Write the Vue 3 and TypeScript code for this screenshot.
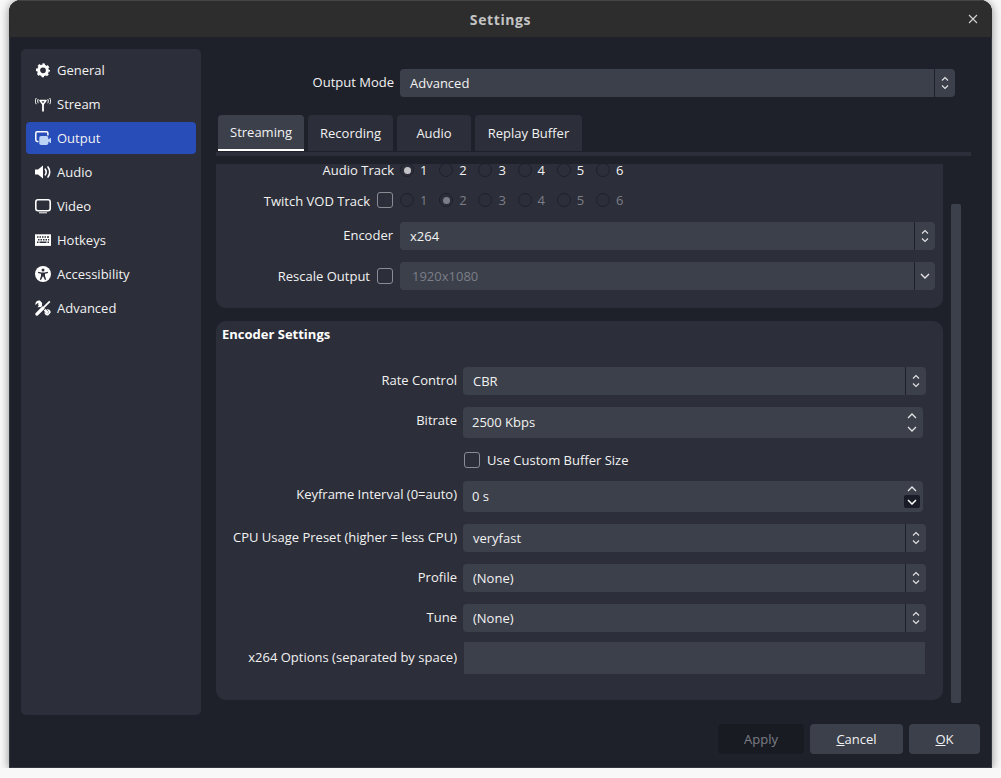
<script setup lang="ts">
const navItems: { name: string; icon: string }[] = [
  { name: 'General', icon: 'gear' },
  { name: 'Stream', icon: 'antenna' },
  { name: 'Output', icon: 'output' },
  { name: 'Audio', icon: 'speaker' },
  { name: 'Video', icon: 'monitor' },
  { name: 'Hotkeys', icon: 'keyboard' },
  { name: 'Accessibility', icon: 'person' },
  { name: 'Advanced', icon: 'tools' },
]
const tabs = ['Streaming', 'Recording', 'Audio', 'Replay Buffer']
const tracks = [1, 2, 3, 4, 5, 6]
</script>

<template>
  <div class="window">
    <header class="titlebar">
      <span class="title">Settings</span>
      <svg class="close" width="10" height="10" viewBox="0 0 10 10">
        <path d="M1 1l8 8M9 1l-8 8" stroke="#d2d2d2" stroke-width="1.1" fill="none" />
      </svg>
    </header>

    <div class="body">
      <nav class="sidebar">
        <div v-for="item in navItems" :key="item.name" class="nav-item" :class="{ active: item.name === 'Output' }">
          <svg class="nav-icon" width="16" height="16" viewBox="0 0 16 16">
            <template v-if="item.icon === 'gear'">
              <circle cx="8" cy="8.300" r="4.400" fill="none" stroke="#fff" stroke-width="3" />
              <circle cx="8" cy="8.300" r="6" fill="none" stroke="#fff" stroke-width="2" stroke-dasharray="2.500 2.212" stroke-dashoffset="1.250" />
            </template>
            <template v-else-if="item.icon === 'antenna'">
              <path d="M5 4.500h6L8 8.500z" fill="none" stroke="#fff" stroke-width="1.500" stroke-linejoin="round" />
              <path d="M7.100 8h1.800v7.600H7.100z" fill="#fff" />
              <path
                d="M3.300 3C2.500 4.200 2.500 6 3.300 7.200M1.300 2C0 4 0 6.200 1.300 8.200M12.700 3c.8 1.200.8 3 0 4.200M14.700 2c1.300 2 1.300 4.200 0 6.200"
                fill="none"
                stroke="#fff"
                stroke-width="1"
              />
            </template>
            <template v-else-if="item.icon === 'output'">
              <path d="M3.500 11.500H2.200C1.400 11.500.8 10.900.8 10.100V3.200C.8 2.400 1.400 1.800 2.200 1.800h9.300c.8 0 1.400.6 1.400 1.400V5.500" fill="none" stroke="#fff" stroke-width="1.500" />
              <rect x="4.300" y="6" width="9" height="9" rx="1.800" fill="#bcd3f5" />
              <path d="M13 9.500l3-1.800v5.600l-3-1.800z" fill="#bcd3f5" />
            </template>
            <template v-else-if="item.icon === 'speaker'">
              <path d="M0 5.500h3L8 1.500v13l-5-4H0z" fill="#fff" />
              <path d="M10.300 5.200c1.100 1.700 1.100 3.900 0 5.600M13 3c2 2.900 2 7.100 0 10" fill="none" stroke="#fff" stroke-width="1.600" stroke-linecap="round" />
            </template>
            <template v-else-if="item.icon === 'monitor'">
              <rect x=".8" y="1.800" width="14.400" height="10.900" rx="2.200" fill="none" stroke="#fff" stroke-width="1.600" />
              <path d="M4 14.800h8" stroke="#fff" stroke-width="1" />
            </template>
            <template v-else-if="item.icon === 'keyboard'">
              <rect y="2.300" width="16" height="11.600" fill="#fff" />
              <path
                d="M2 4.300h1.500v1.500H2zM4.500 4.300H6v1.500H4.500zM7 4.300h1.500v1.500H7zM9.500 4.300H11v1.500H9.500zM12 4.300h2v1.500h-2zM3 6.900h1.500v1.500H3zM5.500 6.900H7v1.500H5.500zM8 6.900h1.500v1.500H8zM10.500 6.900H12v1.500h-1.500zM13 6.900h1.200v1.500H13zM2 9.600h1.500v1.500H2zM4.500 9.600h7v1.500h-7zM12.500 9.600h1.500v1.500h-1.500z"
                fill="#2c2e39"
              />
            </template>
            <template v-else-if="item.icon === 'person'">
              <circle cx="8" cy="8" r="8" fill="#fff" />
              <circle cx="8" cy="3.900" r="1.500" fill="#2c2e39" />
              <path d="M3.200 5.700l3.300.7h3l3.300-.7.3 1.200-3.100.9v2.100l1.200 3.700-1.200.4L8.300 10.500h-.6l-1.700 3.500-1.200-.4 1.200-3.700V7.800l-3.100-.9z" fill="#2c2e39" />
            </template>
            <template v-else>
              <path d="M3.800 3.800l9 9" stroke="#fff" stroke-width="2.400" fill="none" />
              <path d="M4.800.6A3.600 3.600 0 0 0 .5 5l2.300-2 1.800 1.800-2 2.300a3.600 3.600 0 0 0 4.400-4.400z" fill="#fff" />
              <path d="M15.600 12.800a3 3 0 0 0-4-3.400l1.800 1.700v2.100l-2.100.1-1.600-1.800a3 3 0 0 0 3.400 4z" fill="#fff" />
              <path d="M14.600 1.600L2.300 13.900" stroke="#2c2e39" stroke-width="4.600" fill="none" />
              <path d="M14.800 1.400L9 7.200" stroke="#fff" stroke-width="1.800" fill="none" />
              <path d="M8 8L1.900 14.100" stroke="#fff" stroke-width="3.200" stroke-linecap="round" fill="none" />
            </template>
          </svg>
          <span>{{ item.name }}</span>
        </div>
      </nav>

      <main class="content">
        <div class="mode-row">
          <span class="mode-label">Output Mode</span>
          <div class="combo mode-combo">
            <span class="combo-text">Advanced</span>
            <span class="arrows"><svg width="8" height="14" viewBox="0 0 8 14"><path d="M1 4.500l3-3 3 3M1 9.500l3 3 3-3" fill="none" stroke="#e4e4e4" stroke-width="1.100" /></svg></span>
          </div>
        </div>

        <div class="tabs">
          <div v-for="tab in tabs" :key="tab" class="tab" :class="{ selected: tab === 'Streaming' }">{{ tab }}</div>
        </div>
        <div class="tab-rule"></div>

        <div class="scroller">
          <div class="panels">
            <section class="panel top-panel">
              <div class="row track-row">
                <span class="label top-label plain">Audio Track</span>
                <div class="tracks">
                  <span v-for="n in tracks" :key="n" class="track">
                    <i class="radio" :class="{ on: n === 1 }"></i>{{ n }}
                  </span>
                </div>
              </div>
              <div class="row vod-row">
                <span class="label check-label vod-label">Twitch VOD Track</span>
                <i class="check"></i>
                <div class="tracks dim">
                  <span v-for="n in tracks" :key="n" class="track">
                    <i class="radio" :class="{ on: n === 2 }"></i>{{ n }}
                  </span>
                </div>
              </div>
              <div class="row encoder-row">
                <span class="label top-label encoder-label">Encoder</span>
                <div class="combo wide-combo">
                  <span class="combo-text">x264</span>
                  <span class="arrows"><svg width="8" height="14" viewBox="0 0 8 14"><path d="M1 4.500l3-3 3 3M1 9.500l3 3 3-3" fill="none" stroke="#e4e4e4" stroke-width="1.100" /></svg></span>
                </div>
              </div>
              <div class="row rescale-row">
                <span class="label check-label plain">Rescale Output</span>
                <i class="check"></i>
                <div class="combo wide-combo disabled">
                  <span class="combo-text">1920x1080</span>
                  <span class="arrows"><svg width="10" height="6" viewBox="0 0 10 6"><path d="M1 1l4 4 4-4" fill="none" stroke="#e4e4e4" stroke-width="1.400" /></svg></span>
                </div>
              </div>
            </section>

            <section class="panel encoder-panel">
              <h3 class="panel-title">Encoder Settings</h3>
              <div class="row r-rate">
                <span class="label enc-label">Rate Control</span>
                <div class="combo enc-combo">
                  <span class="combo-text">CBR</span>
                  <span class="arrows"><svg width="8" height="14" viewBox="0 0 8 14"><path d="M1 4.500l3-3 3 3M1 9.500l3 3 3-3" fill="none" stroke="#e4e4e4" stroke-width="1.100" /></svg></span>
                </div>
              </div>
              <div class="row r-bitrate">
                <span class="label enc-label spin-label">Bitrate</span>
                <div class="spin">
                  <span class="spin-text">2500 Kbps</span>
                  <span class="spin-btns">
                    <svg width="10" height="6" viewBox="0 0 10 6"><path d="M1 5l4-4 4 4" fill="none" stroke="#e4e4e4" stroke-width="1.300" /></svg>
                    <svg width="10" height="6" viewBox="0 0 10 6"><path d="M1 1l4 4 4-4" fill="none" stroke="#e4e4e4" stroke-width="1.300" /></svg>
                  </span>
                </div>
              </div>
              <div class="row r-buffer">
                <span class="label enc-label"></span>
                <i class="check buffer-check"></i>
                <span class="buffer-text">Use Custom Buffer Size</span>
              </div>
              <div class="row r-key">
                <span class="label enc-label spin-label">Keyframe Interval (0=auto)</span>
                <div class="spin">
                  <span class="spin-text">0 s</span>
                  <span class="spin-btns hovered">
                    <svg width="10" height="6" viewBox="0 0 10 6"><path d="M1 5l4-4 4 4" fill="none" stroke="#e4e4e4" stroke-width="1.300" /></svg>
                    <span class="spin-down"><svg width="10" height="6" viewBox="0 0 10 6"><path d="M1 1l4 4 4-4" fill="none" stroke="#fff" stroke-width="1.500" /></svg></span>
                  </span>
                </div>
              </div>
              <div class="row r-cpu">
                <span class="label enc-label">CPU Usage Preset (higher = less CPU)</span>
                <div class="combo enc-combo">
                  <span class="combo-text">veryfast</span>
                  <span class="arrows"><svg width="8" height="14" viewBox="0 0 8 14"><path d="M1 4.500l3-3 3 3M1 9.500l3 3 3-3" fill="none" stroke="#e4e4e4" stroke-width="1.100" /></svg></span>
                </div>
              </div>
              <div class="row r-profile">
                <span class="label enc-label">Profile</span>
                <div class="combo enc-combo">
                  <span class="combo-text">(None)</span>
                  <span class="arrows"><svg width="8" height="14" viewBox="0 0 8 14"><path d="M1 4.500l3-3 3 3M1 9.500l3 3 3-3" fill="none" stroke="#e4e4e4" stroke-width="1.100" /></svg></span>
                </div>
              </div>
              <div class="row r-tune">
                <span class="label enc-label">Tune</span>
                <div class="combo enc-combo">
                  <span class="combo-text">(None)</span>
                  <span class="arrows"><svg width="8" height="14" viewBox="0 0 8 14"><path d="M1 4.500l3-3 3 3M1 9.500l3 3 3-3" fill="none" stroke="#e4e4e4" stroke-width="1.100" /></svg></span>
                </div>
              </div>
              <div class="row r-options">
                <span class="label enc-label">x264 Options (separated by space)</span>
                <div class="text-input"></div>
              </div>
            </section>
          </div>
          <div class="scrollbar"><div class="thumb"></div></div>
        </div>
      </main>
    </div>

    <footer class="footer">
      <button class="btn apply" disabled>Apply</button>
      <button class="btn cancel"><u>C</u>ancel</button>
      <button class="btn ok"><u>O</u>K</button>
    </footer>
  </div>
</template>

<style>
html,
body {
  margin: 0;
  background: #f8f8f8;
}
</style>

<style scoped>
.window {
  box-sizing: border-box;
  width: 983px;
  height: 768px;
  margin-left: 9px;
  display: flex;
  flex-direction: column;
  background: #1f212a;
  border-radius: 12px 12px 0 0;
  box-shadow: 0 1px 10px rgba(0, 0, 0, 0.45), inset 0 0 0 1px #34363d;
  overflow: hidden;
  font-family: 'Open Sans', sans-serif;
  font-size: 13px;
  color: #f2f2f2;
}
.titlebar {
  flex: none;
  height: 37px;
  box-sizing: border-box;
  border-top: 1px solid #454545;
  background: #2d2d2d;
  display: flex;
  align-items: center;
  justify-content: center;
  position: relative;
}
.title {
  font-weight: 700;
  font-size: 14px;
  letter-spacing: 0.6px;
  color: #c4c4c4;
  margin-top: 1px;
}
.close {
  position: absolute;
  right: 14px;
  top: 13px;
}
.body {
  flex: 1;
  display: flex;
  padding: 12px 0 0 12px;
  min-height: 0;
}
.sidebar {
  flex: none;
  box-sizing: border-box;
  width: 180px;
  height: 666px;
  padding: 5px;
  background: #2c2e39;
  border-radius: 5px;
  display: flex;
  flex-direction: column;
  gap: 2px;
}
.nav-item {
  height: 32px;
  box-sizing: border-box;
  padding-left: 9px;
  display: flex;
  align-items: center;
  gap: 6px;
  border-radius: 4px;
}
.nav-item.active {
  background: #284cb8;
}
.nav-icon {
  flex: none;
}
.content {
  margin-left: 15px;
  width: 755px;
  display: flex;
  flex-direction: column;
}
.mode-row {
  display: flex;
  align-items: center;
  gap: 6px;
  margin-top: 20px;
}
.mode-label {
  width: 178px;
  text-align: right;
  margin-top: -2px;
}
.combo {
  height: 28px;
  display: flex;
  align-items: stretch;
  background: #3c404b;
  border-radius: 4px;
  box-sizing: border-box;
}
.combo-text {
  flex: 1;
  padding-left: 10px;
  line-height: 28px;
}
.arrows {
  flex: none;
  width: 20px;
  border-left: 1px solid #1f212a;
  display: flex;
  align-items: center;
  justify-content: center;
}
.mode-combo {
  width: 555px;
}
.tabs {
  display: flex;
  gap: 4px;
  margin: 18px 0 0 2px;
}
.tab {
  height: 36px;
  box-sizing: border-box;
  line-height: 37px;
  background: #2c2e39;
  border-radius: 4px 4px 0 0;
  text-align: center;
}
.tab:nth-child(2) {
  width: 85px;
}
.tab:nth-child(3) {
  width: 74px;
}
.tab:nth-child(4) {
  width: 107px;
}
.tab.selected {
  background: #3c404b;
  border-bottom: 2px solid #fff;
  line-height: 35px;
  width: 86px;
}
.tab-rule {
  height: 4px;
  margin-top: 1px;
  background: #2c2e39;
}
.scroller {
  margin-top: 8px;
  height: 541px;
  display: flex;
  overflow: hidden;
}
.panels {
  width: 727px;
  flex: none;
  display: flex;
  flex-direction: column;
  gap: 13px;
}
.panel {
  background: #2c2e39;
  box-sizing: border-box;
}
.top-panel {
  height: 144px;
  border-radius: 0 0 10px 10px;
  position: relative;
}
.encoder-panel {
  height: 379px;
  border-radius: 10px;
  padding-left: 6px;
  display: flex;
  flex-direction: column;
}
.row {
  display: flex;
  align-items: center;
}
.label {
  flex: none;
  text-align: right;
  white-space: nowrap;
  margin-top: -2px;
}
.label.plain {
  margin-top: 0;
}
.vod-label {
  margin-top: 2px;
}
.encoder-label {
  transform: translateX(-1px);
}
.spin-label {
  margin-top: -6px;
}
.top-label {
  width: 178px;
  margin-right: 6px;
}
.check-label {
  width: 154px;
  margin-right: 7px;
}
.track-row {
  height: 18px;
  margin-top: -3px;
}
.vod-row {
  height: 18px;
  margin-top: 12px;
}
.vod-row .tracks {
  margin-left: 7px;
}
.encoder-row {
  margin-top: 13px;
}
.rescale-row {
  margin-top: 12px;
}
.rescale-row .combo {
  margin-left: 7px;
}
.wide-combo {
  width: 535px;
}
.disabled .combo-text {
  color: #7b7e87;
  padding-left: 12px;
}
.tracks {
  display: flex;
  gap: 11.8px;
}
.track {
  display: flex;
  align-items: center;
  gap: 6px;
  width: 27.4px;
}
.dim {
  color: #7b7e87;
}
.radio {
  flex: none;
  width: 14px;
  height: 14px;
  box-sizing: border-box;
  border: 1px solid #1f212a;
  border-radius: 50%;
  background: #2c2e39;
  display: flex;
  align-items: center;
  justify-content: center;
}
.radio.on::after {
  content: '';
  width: 7px;
  height: 7px;
  border-radius: 50%;
  background: #c4c4c8;
}
.dim .radio.on::after {
  background: #7b7e87;
}
.check {
  flex: none;
  width: 16px;
  height: 16px;
  box-sizing: border-box;
  border: 1.5px solid #8a8c93;
  border-radius: 3px;
}
.panel-title {
  margin: 4px 0 0;
  font-size: 13px;
  font-weight: 700;
  line-height: 18px;
  color: #fff;
}
.enc-label {
  width: 235px;
  margin-right: 6px;
}
.enc-combo {
  width: 463px;
}
.enc-combo .combo-text {
  padding-left: 10px;
}
.r-rate {
  margin-top: 24px;
}
.r-bitrate {
  margin-top: 12px;
}
.spin {
  width: 460px;
  height: 31px;
  display: flex;
  align-items: center;
  justify-content: space-between;
  background: #3c404b;
  border-radius: 4px;
}
.spin-text {
  padding-left: 9px;
  margin-top: -1px;
}
.spin-btns {
  width: 16px;
  margin-right: 3px;
  display: flex;
  flex-direction: column;
  align-items: center;
  gap: 7px;
}
.spin-btns.hovered {
  gap: 3px;
  margin-top: 1px;
}
.spin-down {
  width: 16px;
  height: 13px;
  display: flex;
  align-items: center;
  justify-content: center;
  background: #191b26;
  border-radius: 2px;
}
.r-buffer {
  height: 16px;
  margin-top: 14px;
}
.buffer-check {
  margin-left: 1px;
}
.buffer-text {
  margin-left: 7px;
}
.r-key {
  margin-top: 13px;
}
.r-cpu,
.r-profile,
.r-tune {
  margin-top: 12px;
}
.r-options {
  margin-top: 10px;
}
.text-input {
  width: 461px;
  height: 32px;
  margin-left: 1px;
  background: #3c404b;
}
.scrollbar {
  flex: none;
  margin-left: 8px;
  width: 10px;
  padding-top: 40px;
  height: 539px;
  box-sizing: border-box;
}
.thumb {
  height: 100%;
  background: #3c404b;
  border-radius: 2px;
}
.footer {
  flex: none;
  height: 53px;
  display: flex;
  justify-content: flex-end;
  gap: 6px;
  padding: 9px 12px 0 0;
  box-sizing: border-box;
}
.btn {
  height: 30px;
  border: none;
  border-radius: 4px;
  background: #3c404b;
  color: #f2f2f2;
  font: inherit;
  padding: 0;
}
.apply {
  width: 86px;
  background: #191b23;
  color: #7b7e87;
}
.cancel {
  width: 93px;
}
.ok {
  width: 71px;
}
</style>
